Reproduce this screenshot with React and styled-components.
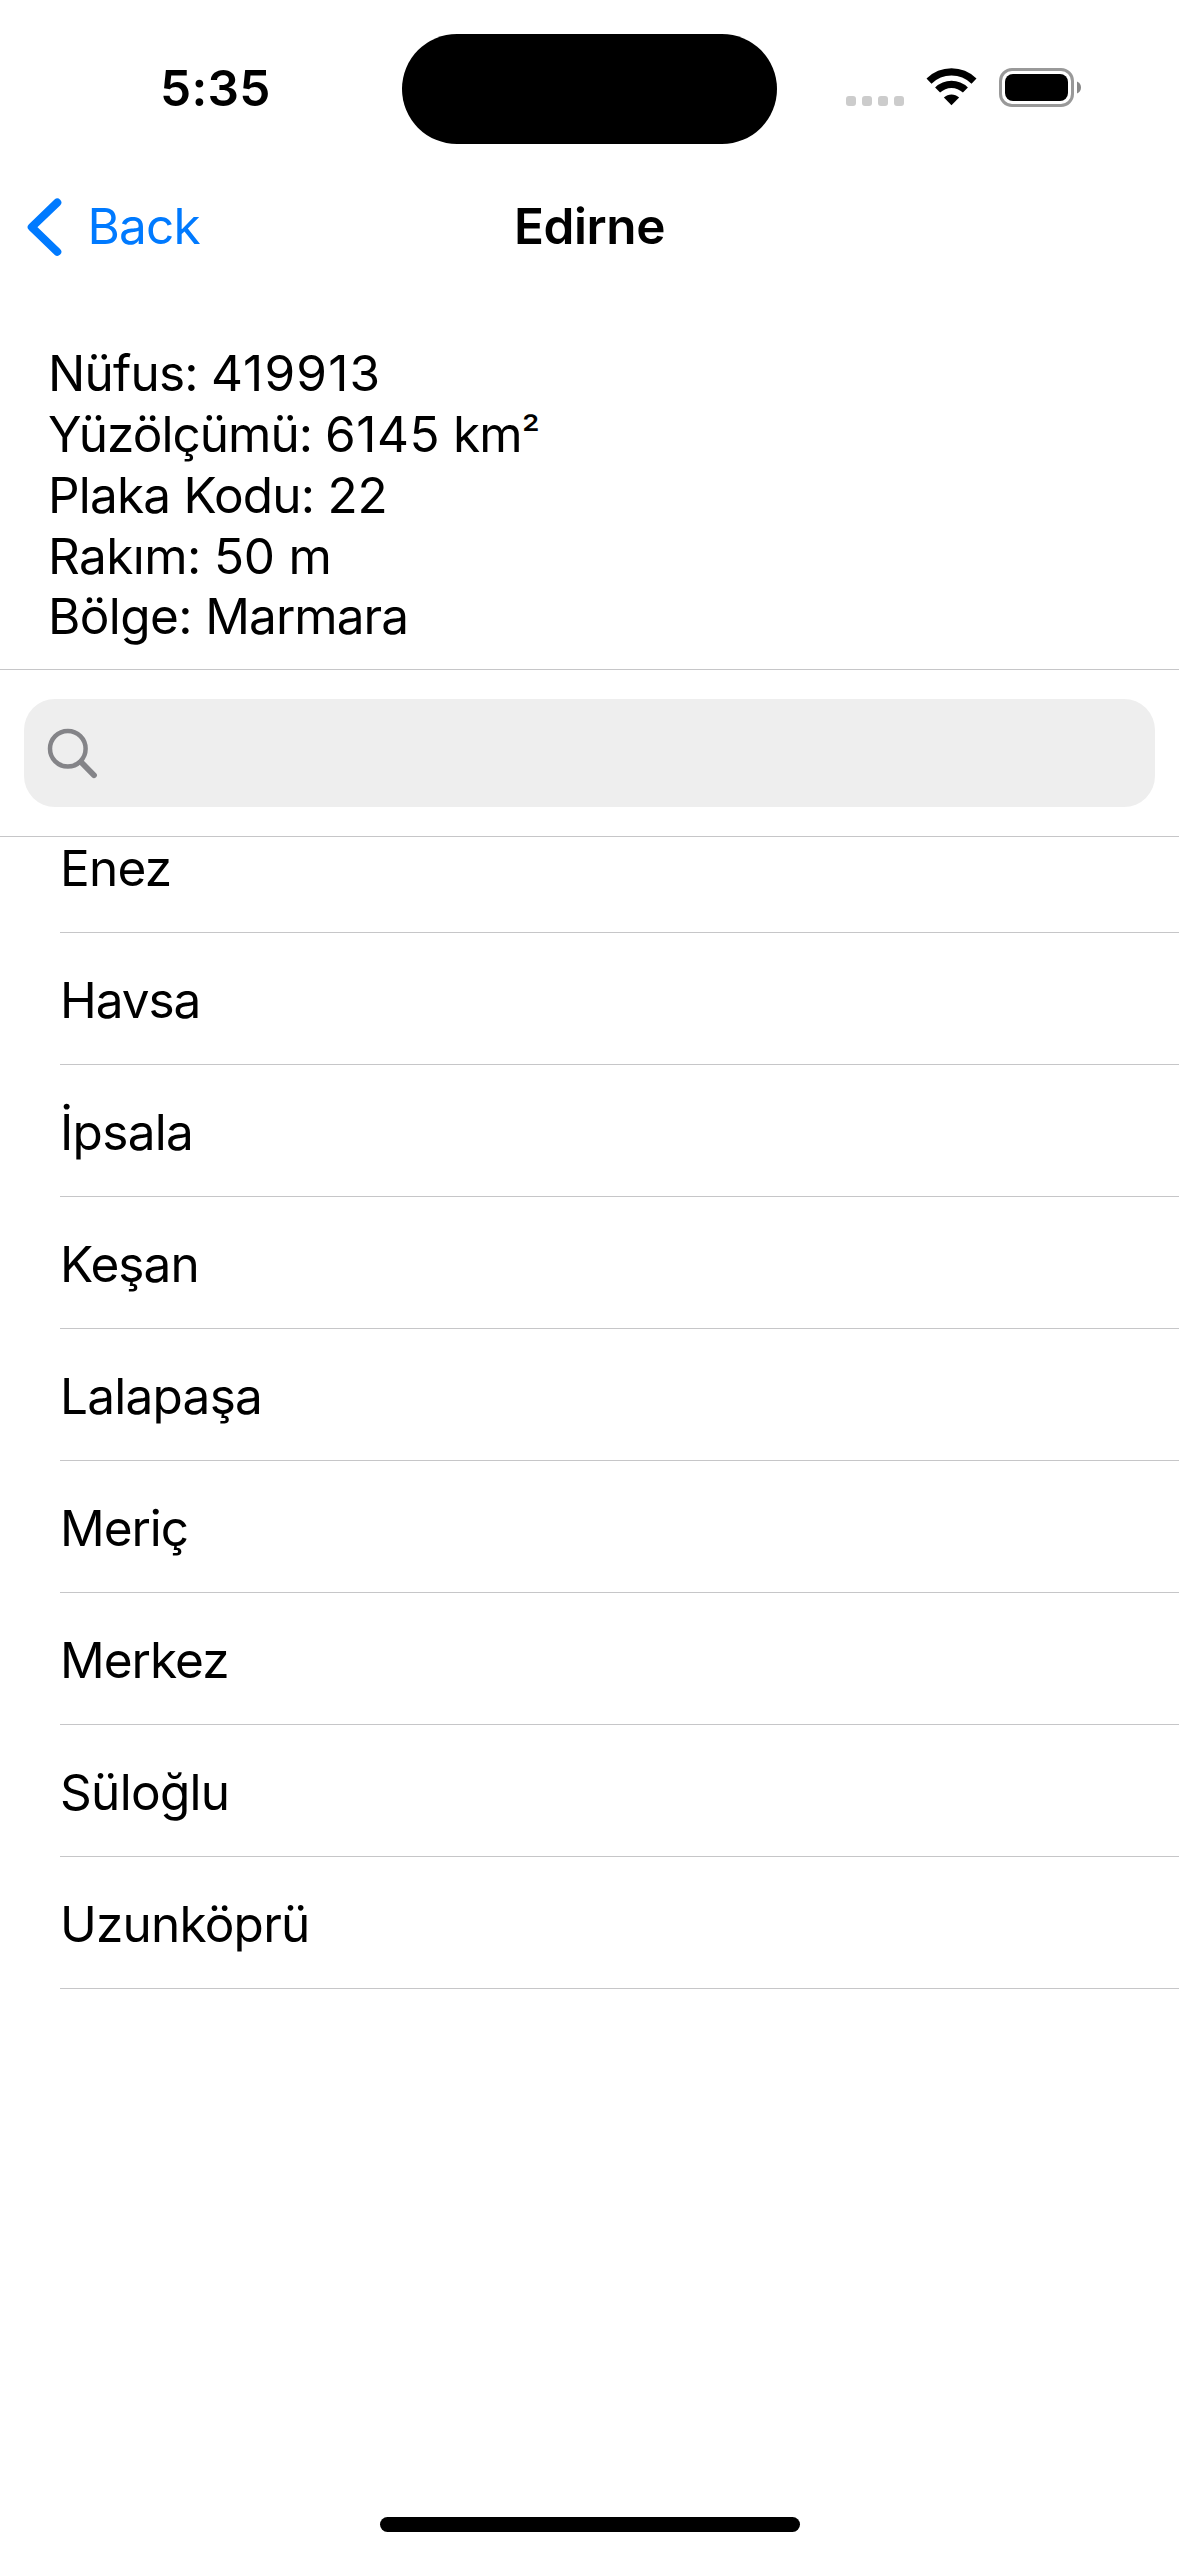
import React from 'react';
import styled, { createGlobalStyle } from 'styled-components';

const GlobalStyle = createGlobalStyle`
  *, *::before, *::after { box-sizing: border-box; }
  body { margin: 0; background: #fff; }
`;

const Screen = styled.div`
  display: flex;
  flex-direction: column;
  width: 1179px;
  height: 2556px;
  overflow: hidden;
  background: #fff;
  color: #000;
  font-family: Inter, 'Liberation Sans', sans-serif;
  font-size: 49.5px;
  line-height: 61px;
  font-kerning: normal;
`;

const StatusBar = styled.header`
  display: grid;
  grid-template-columns: 402px 375px 402px;
  height: 177px;
  padding-top: 33.5px;
`;

const Clock = styled.time`
  padding-left: 160px;
  padding-top: 24.5px;
  font-weight: 600;
  letter-spacing: ${(p) => p.$spacing}px;
`;

const Island = styled.div`
  height: 110.5px;
  border-radius: 56px;
  background: #000;
`;

const StatusIcons = styled.div`
  display: flex;
  align-items: flex-start;
  gap: 22px;
  padding: 34.5px 0 0 69px;
`;

const SignalDots = styled.div`
  display: flex;
  gap: 6px;
  margin-top: 28px;
`;

const Dot = styled.span`
  width: 10px;
  height: 10px;
  border-radius: 3px;
  background: #ccc;
`;

const NavBar = styled.nav`
  display: grid;
  grid-template-columns: 1fr auto 1fr;
  align-items: start;
  height: 165px;
  padding: 19px 0 0 25px;
`;

const BackButton = styled.button`
  display: flex;
  align-items: center;
  gap: 24.5px;
  padding: 0;
  border: 0;
  background: none;
  color: #007aff;
  font: inherit;
  letter-spacing: ${(p) => p.$spacing}px;
`;

const Title = styled.h1`
  margin: 0;
  padding-right: 25px;
  font-size: inherit;
  font-weight: 600;
  letter-spacing: ${(p) => p.$spacing}px;
`;

const Info = styled.section`
  height: 327px;
  padding: 1px 0 0 48px;
  line-height: 60.86px;
`;

const InfoLine = styled.p`
  margin: 0;
  white-space: pre;
`;

const InfoText = styled.span`
  letter-spacing: ${(p) => p.$spacing}px;
`;

const Unit = styled.span`
  font-size: 41px;
  line-height: 0;
  vertical-align: 3px;
`;

const SearchBar = styled.div`
  height: 168px;
  padding: 29px 24px;
  border-top: 1px solid #c6c6c8;
  border-bottom: 1px solid #c6c6c8;
`;

const SearchField = styled.div`
  display: flex;
  height: 108px;
  padding: 29px 0 0 23px;
  border-radius: 31px;
  background: #eee;
`;

const List = styled.ul`
  flex: 1;
  margin: 0;
  padding: 0 0 0 60px;
  list-style: none;
`;

const Row = styled.li`
  display: flex;
  align-items: flex-end;
  height: ${(p) => (p.$clipped ? 96 : 132)}px;
  padding-bottom: 33px;
  border-bottom: 1px solid #c6c6c8;
  letter-spacing: ${(p) => p.$spacing}px;
`;

const HomeIndicator = styled.div`
  width: 420px;
  height: 15px;
  margin: 0 auto 24px 380px;
  border-radius: 8px;
  background: #000;
`;

const WifiIcon = () => (
  <svg width="51" height="38" viewBox="0 0 51 38" fill="none" stroke="#000" strokeWidth="7.2">
    <path d="M3 13.1C15.8 .9 35.2 .9 48 13.1" />
    <path d="M11.6 22C19.5 14.4 31.5 14.4 39.4 22" />
    <path d="M17.9 29.6C22.2 25.4 28.8 25.4 33.1 29.6L25.5 37.2Z" fill="#000" stroke="none" />
  </svg>
);

const BatteryIcon = () => (
  <svg width="83" height="39" viewBox="0 0 83 39">
    <rect x="1.5" y="1.5" width="72" height="36" rx="11.5" fill="none" stroke="#999" strokeWidth="3" />
    <rect x="6" y="6" width="63" height="27" rx="8" fill="#000" />
    <path d="M78 13.5C80.5 14.5 82 16.8 82 19.5S80.5 24.5 78 25.5Z" fill="#888" />
  </svg>
);

const BackIcon = () => (
  <svg width="38" height="60" viewBox="0 0 38 60" fill="none" stroke="currentColor" strokeWidth="8" strokeLinecap="round" strokeLinejoin="round">
    <path d="M32.3 5.5L6.7 30.1L32.3 54.8" />
  </svg>
);

const SearchIcon = () => (
  <svg width="52" height="52" viewBox="0 0 52 52" fill="none" stroke="#848488">
    <circle cx="20.8" cy="20.8" r="17.8" strokeWidth="4.5" />
    <path d="M34 34L47 47.2" strokeWidth="5.8" strokeLinecap="round" />
  </svg>
);

const facts = [
  { label: 'Nüfus: ', value: '419913', labelSpacing: -0.8, valueSpacing: 1.2 },
  { label: 'Yüzölçümü: ', value: '6145', suffix: ' km', exponent: '²', labelSpacing: -0.95, valueSpacing: 0.5, suffixSpacing: -0.9 },
  { label: 'Plaka Kodu: ', value: '22', labelSpacing: -0.8, valueSpacing: -0.2 },
  { label: 'Rakım: ', value: '50 m', labelSpacing: -0.6, valueSpacing: -0.2 },
  { label: 'Bölge: ', value: 'Marmara', labelSpacing: -0.6, valueSpacing: -0.95 },
];

const districts = [
  ['Enez', -0.8],
  ['Havsa', -1.1],
  ['İpsala', -0.7],
  ['Keşan', -0.9],
  ['Lalapaşa', -0.75],
  ['Meriç', -1.05],
  ['Merkez', -1],
  ['Süloğlu', -0.7],
  ['Uzunköprü', -0.8],
];

export default function App() {
  return (
    <>
      <GlobalStyle />
      <Screen>
        <StatusBar>
          <Clock $spacing={0.3}>5:35</Clock>
          <Island />
          <StatusIcons>
            <SignalDots>
              <Dot /><Dot /><Dot /><Dot />
            </SignalDots>
            <WifiIcon />
            <BatteryIcon />
          </StatusIcons>
        </StatusBar>
        <NavBar>
          <BackButton $spacing={-0.8}>
            <BackIcon />
            Back
          </BackButton>
          <Title $spacing={-0.4}>Edirne</Title>
        </NavBar>
        <Info>
          {facts.map((fact) => (
            <InfoLine key={fact.label}>
              <InfoText $spacing={fact.labelSpacing}>{fact.label}</InfoText>
              <InfoText $spacing={fact.valueSpacing}>{fact.value}</InfoText>
              {fact.suffix && <InfoText $spacing={fact.suffixSpacing}>{fact.suffix}</InfoText>}
              {fact.exponent && <Unit>{fact.exponent}</Unit>}
            </InfoLine>
          ))}
        </Info>
        <SearchBar>
          <SearchField>
            <SearchIcon />
          </SearchField>
        </SearchBar>
        <List>
          {districts.map(([name, spacing], i) => (
            <Row key={name} $clipped={i === 0} $spacing={spacing}>{name}</Row>
          ))}
        </List>
        <HomeIndicator />
      </Screen>
    </>
  );
}
